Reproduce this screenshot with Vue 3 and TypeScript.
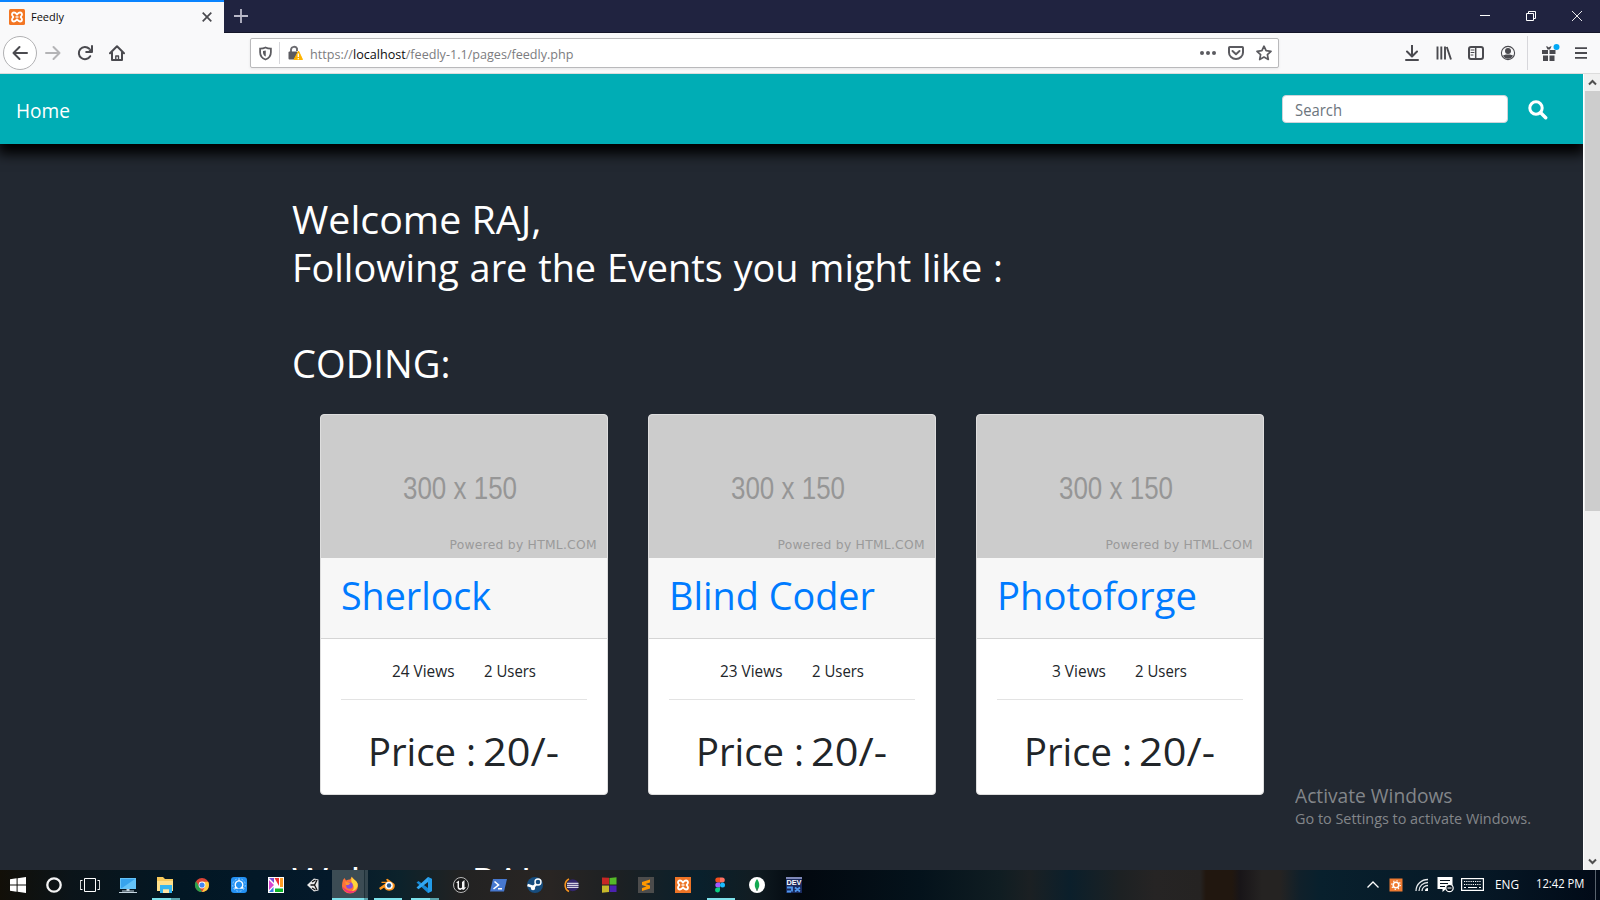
<script setup lang="ts">
import type { Directive } from 'vue'

interface EventCard { title: string; titleWidth: number; views: string; viewsWidth: number }
interface TaskItem { name: string; width: number; state?: string }

const cards: EventCard[] = [
  { title: 'Sherlock', titleWidth: 150, views: '24 Views', viewsWidth: 62.5 },
  { title: 'Blind Coder', titleWidth: 206, views: '23 Views', viewsWidth: 62.5 },
  { title: 'Photoforge', titleWidth: 200, views: '3 Views', viewsWidth: 54 },
]

const tasks: TaskItem[] = [
  { name: 'start', width: 36 }, { name: 'cortana', width: 36 }, { name: 'view', width: 37 },
  { name: 'pc', width: 38 }, { name: 'explorer', width: 37, state: 'multi' }, { name: 'chrome', width: 37 },
  { name: 'settings', width: 37 }, { name: 'picasa', width: 37 }, { name: 'unity', width: 37 },
  { name: 'firefox', width: 37, state: 'active' }, { name: 'blender', width: 37, state: 'open' },
  { name: 'vscode', width: 37, state: 'multi' }, { name: 'unreal', width: 37 }, { name: 'powershell', width: 37 },
  { name: 'steam', width: 37 }, { name: 'eclipse', width: 37 }, { name: 'blocks', width: 37 },
  { name: 'sublime', width: 37 }, { name: 'xampp', width: 37 }, { name: 'figma', width: 37, state: 'open' },
  { name: 'mongo', width: 37 }, { name: 'dev', width: 37 },
]

// Condenses a run of text to the given advance width, in the layout as well.
const vFit: Directive<HTMLElement, number> = {
  mounted(el, binding) {
    const natural = el.getBoundingClientRect().width
    if (!natural) return
    el.style.transform = `scaleX(${binding.value / natural})`
    el.style.marginRight = `${binding.value - natural}px`
  },
}
</script>

<template>
  <div class="screen">
    <header class="tabs">
      <div class="tab">
        <svg class="fav" viewBox="0 0 16 16"><rect width="16" height="16" rx="1.5" fill="#f37623" /><path d="M5 3.500C3.500 3.500 3 4.500 3 5.500S3.800 7 4.300 8C3.800 9 3 9.500 3 10.500s.5 2 2 2 2.200-1 3-2c.8 1 1.500 2 3 2s2-1 2-2-.8-1.500-1.300-2.500C12.200 7 13 6.500 13 5.500s-.5-2-2-2-2.200 1-3 2c-.8-1-1.500-2-3-2z" fill="none" stroke="#fff" stroke-width="1.800" /><path d="M6.500 8h3" stroke="#fff" stroke-width="1.400" /></svg>
        <span class="grow"><span v-fit="33" class="fit tabname">Feedly</span></span>
        <svg class="tabx" viewBox="0 0 10 10"><path d="M.7.7l8.600 8.600M9.300.7L.7 9.300" stroke="#4a4a4f" stroke-width="1.700" /></svg>
      </div>
      <svg class="plus" viewBox="0 0 14 14"><path d="M7 0v14M0 7h14" stroke="#b9b9c8" stroke-width="1.800" /></svg>
      <div class="winbtns">
        <svg viewBox="0 0 12 12"><path d="M1 5.500h10" stroke="#fff" /></svg>
        <svg viewBox="0 0 12 12"><path d="M1.500 3.500h7v7h-7zM3.500 3.500v-2h7v7h-2" fill="none" stroke="#fff" /></svg>
        <svg viewBox="0 0 12 12"><path d="M1 1l10 10M11 1L1 11" stroke="#fff" stroke-width=".9" /></svg>
      </div>
    </header>

    <div class="toolbar">
      <div class="back"><svg viewBox="0 0 16 16"><path d="M15 8H1.500M7.500 2L1.500 8l6 6" /></svg></div>
      <svg class="ico fwd" viewBox="0 0 16 16"><path d="M1 8h13.500M8.500 2l6 6-6 6" /></svg>
      <svg class="ico reload" viewBox="0 0 16 16"><path d="M13.200 11.200A6.100 6.100 0 1 1 12.300 3.800" /><path d="M15 1v6H9.200" /><path d="M11 6.500L15 2.500v4z" fill="#4a4a4f" stroke="none" /></svg>
      <svg class="ico home" viewBox="0 0 16 16"><path d="M1 8.300l7-7 7 7M3 7.500V15h10V7.500" /><path d="M6.800 15v-4h2.700v4" stroke-width="1.400" /></svg>
      <div class="url">
        <svg class="shield" viewBox="0 0 14 15"><path d="M7 1C5 2 3 2.200 1.200 2.200v4C1.200 10 3.500 12.800 7 14c3.500-1.200 5.800-4 5.800-7.800v-4C11 2.200 9 2 7 1z" fill="none" stroke="#5b5b60" stroke-width="1.900" /><path d="M7.300 4.300v6.500c-1.800-.8-3-2.600-3-4.500V4.800z" fill="#5b5b60" /></svg>
        <i class="urlsep"></i>
        <svg class="lock" viewBox="0 0 15 16"><path d="M3 7V4.500A3.200 3.200 0 0 1 9 3.500V6" fill="none" stroke="#6b6b70" stroke-width="1.900" /><rect x="0.500" y="6.500" width="9" height="8" rx="1" fill="#5b5b60" /><path d="M10.500 6l4 8.500h-8.500z" fill="#ffb400" stroke="#ffb400" stroke-linejoin="round" /><path d="M10.300 8.500v3.500M10.300 13v1.300" stroke="#fff" stroke-width="1.300" /></svg>
        <span class="grow"><span v-fit="263.5" class="fit address">https://<b>localhost</b>/feedly-1.1/pages/feedly.php</span></span>
        <svg class="dots" viewBox="0 0 16 4"><circle cx="2" cy="2" r="2" /><circle cx="8" cy="2" r="2" /><circle cx="14" cy="2" r="2" /></svg>
        <svg class="ico" viewBox="0 0 16 16"><path d="M1.800 2h12.400q.8 0 .8.800V7.500a7 6.500 0 0 1-14 0V2.800Q1 2 1.800 2z" /><path d="M4.500 6L8 9.200 11.500 6" /></svg>
        <svg class="ico star" viewBox="0 0 16 16"><path d="M8 1.200l2.100 4.500 4.900.6-3.600 3.300.9 4.900L8 12.100l-4.300 2.400.9-4.900L1 6.300l4.900-.6z" stroke-width="1.700" /></svg>
      </div>
      <div class="tools">
        <svg class="ico" viewBox="0 0 16 16"><path d="M8 0v11M3 6.500l5 5 5-5M2 15h12" /></svg>
        <svg class="ico" viewBox="0 0 16 16"><path d="M1.500 1.500v13M5.300 1.500v13M9 1.500v13M10.800 2l4.200 12.500" stroke-width="1.900" stroke-linecap="butt" /></svg>
        <svg class="ico" viewBox="0 0 16 16"><rect x="1" y="2" width="14" height="12" rx="2" /><path d="M7.700 2v12" stroke-width="1.500" /><path d="M3 5h3M3 7.500h3M3 10h2" stroke-width="1" /></svg>
        <svg class="ico" viewBox="0 0 16 16"><circle cx="8" cy="8" r="6.600" stroke-width="1.100" /><circle cx="8" cy="6" r="3" fill="#4a4a4f" stroke="none" /><path d="M3 10.500c1 0 2-1 3-1h4c1 0 2 1 3 1-1 2.300-3 3.300-5 3.300s-4-1-5-3.300z" fill="#4a4a4f" stroke="none" /></svg>
        <i class="toolsep"></i>
        <svg class="gift" viewBox="0 0 20 20"><path d="M2 7h6v4H2zM9.500 7h6v4h-6zM3 12.500h5V18H3zM9.500 12.500h5V18h-5zM6 3.300l1.500.2 1.300 1 1.300-1 1.500-.2L10 6.500H7.500z" fill="#4a4a4f" /><circle cx="16.500" cy="4" r="3" fill="#00a8f5" /></svg>
        <svg class="burger" viewBox="0 0 12 12"><path d="M0 1.200h12M0 6h12M0 10.800h12" stroke="#4a4a4f" stroke-width="1.800" /></svg>
      </div>
    </div>

    <div class="viewport">
      <main class="page">
        <nav class="nav">
          <span class="grow"><span v-fit="54" class="fit homelink">Home</span></span>
          <div class="search"><span v-fit="47" class="fit">Search</span></div>
          <svg class="glass" viewBox="0 0 20 20"><circle cx="8" cy="8" r="6.200" fill="none" stroke="#fff" stroke-width="3" /><path d="M12.700 12.700l5 5" stroke="#fff" stroke-width="3.400" stroke-linecap="round" /></svg>
        </nav>
        <div class="content">
          <h1><span v-fit="249.5" class="fit">Welcome RAJ,</span></h1>
          <h1><span v-fit="711" class="fit long">Following are the Events you might like :</span></h1>
          <h1 class="category"><span v-fit="158.5" class="fit">CODING:</span></h1>
          <div class="cards">
            <article v-for="card in cards" :key="card.title" class="card">
              <svg class="placeholder" viewBox="0 0 286 143">
                <rect width="286" height="143" fill="#ccc" />
                <text x="82" y="84" textLength="114" lengthAdjust="spacingAndGlyphs" class="dimension">300 x 150</text>
                <text x="128.500" y="133.500" textLength="147" class="powered">Powered by HTML.COM</text>
              </svg>
              <div class="cardhead"><span v-fit="card.titleWidth" class="fit">{{ card.title }}</span></div>
              <div class="cardbody">
                <div class="stats"><span v-fit="card.viewsWidth" class="fit">{{ card.views }}</span><span v-fit="52" class="fit">2 Users</span></div>
                <div class="price"><span v-fit="108" class="fit">Price :</span><span v-fit="76" class="fit">20/-</span></div>
              </div>
            </article>
          </div>
          <h1 class="next"><span v-fit="249.5" class="fit">Welcome RAJ,</span></h1>
        </div>
        <aside class="activate">
          <div class="act1"><span v-fit="157.5" class="fit">Activate Windows</span></div>
          <div class="act2"><span v-fit="236" class="fit">Go to Settings to activate Windows.</span></div>
        </aside>
      </main>
      <div class="scrollbar">
        <svg viewBox="0 0 17 17"><path d="M5 10.500l3.500-3.500 3.500 3.500" /></svg>
        <i class="thumb"></i>
        <svg viewBox="0 0 17 17"><path d="M5 6.500l3.500 3.500 3.500-3.500" /></svg>
      </div>
    </div>

    <footer class="taskbar">
      <div v-for="t in tasks" :key="t.name" class="task" :class="[t.state, t.name]" :style="{ width: t.width + 'px' }">
        <svg viewBox="0 0 20 20">
          <g v-if="t.name === 'start'" fill="#fff"><path d="M2 4.300l6.600-1v6.200H2zM9.600 3.200L18 2v7.500H9.600zM2 10.500h6.600v6.200L2 15.800zM9.600 10.500H18V18l-8.400-1.200z" /></g>
          <circle v-else-if="t.name === 'cortana'" cx="10" cy="10" r="6.700" fill="none" stroke="#f4f4f4" stroke-width="2.300" />
          <path v-else-if="t.name === 'view'" d="M4.500 3.500h11v13h-11zM2.500 5.500h-2.200v9h2.200M17.500 5.500h2.200v9h-2.200" fill="none" stroke="#fff" />
          <g v-else-if="t.name === 'pc'"><path d="M2 3h16v11H2z" fill="#64c3f8" /><path d="M3 4h14L4 13H3z" fill="#38a4ed" /><path d="M8.500 14h3v1.500h-3zM4 15.500h12v1H4zM1 17h18v1H1z" fill="#c4d4df" /></g>
          <g v-else-if="t.name === 'explorer'"><path d="M2 2h6l2 2h8v12H2z" fill="#f7c95c" /><path d="M2 6h16v10H2z" fill="#ffe08a" /><path d="M5 10h12v8h-3v-3.500H8V18H5z" fill="#35b5ef" /><path d="M8 14.500h6V18H8z" fill="#ffe7a7" /></g>
          <g v-else-if="t.name === 'chrome'"><circle cx="10" cy="10" r="7" fill="#db4437" /><path d="M4 6.300l3.500 6L10 17a7 7 0 0 1-6-10.700z" fill="#2ba24c" /><path d="M10 6.800h6.200A7 7 0 0 1 10 17l3-5.200z" fill="#ffcd40" /><circle cx="10" cy="10" r="3.400" fill="#fff" /><circle cx="10" cy="10" r="2.600" fill="#4285f4" /></g>
          <g v-else-if="t.name === 'settings'"><rect x="2" y="2" width="16" height="16" rx="3" fill="#2491f3" /><circle cx="10" cy="10" r="6.300" fill="none" stroke="#a9dcff" stroke-width=".8" stroke-dasharray="2 1.500" /><path d="M5.500 13h2.500a3.800 3.800 0 1 1 4 0h2.500M10 4.500v2" fill="none" stroke="#fff" stroke-width="1.300" /></g>
          <g v-else-if="t.name === 'picasa'"><path d="M2 2h16v16H2z" fill="#fff" /><path d="M3 3h5v5z" fill="#7c4bd1" /><path d="M8.500 3H13v8z" fill="#ef3030" /><path d="M14 3h3v9h-3z" fill="#ff9d25" /><path d="M3 5l5 5-5 5z" fill="#d946cf" /><path d="M9 13.500h8V17H9z" fill="#10b629" /><path d="M3 17l4.500-5v5z" fill="#387de4" /></g>
          <g v-else-if="t.name === 'unity'"><path d="M4 10l7-6.500 4.500 1v11l-4.500 1z" fill="#e9e9e9" /><path d="M7.500 10h4l2.500-5M11.500 10l2.500 5M9 7L12.500 5M9 13l3.500 2" stroke="#111" stroke-width="1.300" fill="none" /></g>
          <g v-else-if="t.name === 'firefox'"><path d="M3 5l1.500-2L6 5.500c1.500-1 3-1 4-1L12 2l3 3.500c2 1.500 3 3 3 5.500a8 7.500 0 0 1-16 0c0-2 .3-4 1-6z" fill="#ff7139" /><path d="M11.500 1.500c1 2.500 5 3.500 6 7 1 4-2 7-5.500 7.500 1.500-1.500 2-3 1.500-5s-3-3-2-9.500z" fill="#ffd43b" /><path d="M2.300 11.500c1 4 4 5.500 7 6.500 3 .5 6-1 7.700-3-4 2-9 2-14.700-3.500z" fill="#f0317b" /><circle cx="9.500" cy="10.500" r="3.300" fill="#8a4ad9" /><path d="M5 6.500l5.500 1.500-2 2H6z" fill="#ff9632" /></g>
          <g v-else-if="t.name === 'blender'"><path d="M2 13l7-5H4.500V6.700h6L9 4.500l1.500-.8L17.500 9c2 7-8 9-10.300 3.500L3.500 15z" fill="#ff961e" /><circle cx="12" cy="10.500" r="3.800" fill="#fff" /><circle cx="12" cy="10.500" r="2.200" fill="#245b93" /></g>
          <g v-else-if="t.name === 'vscode'"><path d="M14 2l4 2v12l-4 2L2.500 7.500 4.500 6 14 13z" fill="#1689d5" /><path d="M14 2v5L4.500 14.200l-2-1.700z" fill="#32a8f2" /><path d="M14 2l4 2v12l-4 2z" fill="#229ce9" /></g>
          <g v-else-if="t.name === 'unreal'"><circle cx="10" cy="10" r="7.500" fill="#191919" stroke="#b8b8b8" /><path d="M5 7.500l3-2v7c1 1 2 1 3 0V7l2.500-2v7.500l1.500-.5c-1 2-2 2.700-3 3l-1-1-1.500 1c-2 0-3-1-3-3V8z" fill="#f4f4f4" /></g>
          <g v-else-if="t.name === 'powershell'"><path d="M5 4h14l-3 12.500H2z" fill="#4778cf" /><path d="M6.500 6.500l4 3.500-5 4M10 13.700h4" fill="none" stroke="#fff" stroke-width="1.600" /></g>
          <g v-else-if="t.name === 'steam'"><circle cx="10" cy="10" r="8" fill="#174d7e" /><path d="M2.500 10l6 2 3.500-4" stroke="#fff" stroke-width="2.500" fill="none" /><circle cx="13" cy="7" r="3" fill="#174d7e" stroke="#fff" stroke-width="1.400" /><circle cx="8" cy="13" r="2.200" fill="#fff" /></g>
          <g v-else-if="t.name === 'eclipse'"><path d="M7 4a7 7 0 0 0 0 12.500" fill="none" stroke="#f8941e" stroke-width="1.600" /><circle cx="10.700" cy="10.200" r="6" fill="#33266c" /><path d="M5 8.300h11.500M5 10.300h11.500M5 12.300h11.500" stroke="#fff" stroke-width="1" /></g>
          <g v-else-if="t.name === 'blocks'"><path d="M3 2.500l7 .3v6.700H3z" fill="#c72725" /><path d="M10.500 3l7-.8V9.500h-7z" fill="#55b929" /><path d="M3 10.500h7V17l-7 .8z" fill="#c6b82a" /><path d="M10.500 10.500h7V17h-7z" fill="#4c22b0" /></g>
          <g v-else-if="t.name === 'sublime'"><path d="M2 2h16v16H2z" fill="#4c4c4c" /><path d="M6 7l8-2.500v3L9.500 9 14 10.500v3L6 16v-3l4.500-1.500L6 10z" fill="#ff9800" /></g>
          <g v-else-if="t.name === 'xampp'"><path d="M2 2h16v16H2z" fill="#ed7426" /><path d="M7 5.500c-1.500 0-2 1-2 2S5.800 9 6.300 10C5.800 11 5 11.500 5 12.500s.5 2 2 2 2.200-1 3-2c.8 1 1.500 2 3 2s2-1 2-2-.8-1.500-1.300-2.500C14.200 9 15 8.500 15 7.500s-.5-2-2-2-2.200 1-3 2c-.8-1-1.500-2-3-2z" fill="none" stroke="#fff" stroke-width="1.800" /><path d="M8.500 10h3" stroke="#fff" stroke-width="1.400" /></g>
          <g v-else-if="t.name === 'figma'"><path d="M10 2.500H7.800a2.500 2.500 0 0 0 0 5H10z" fill="#f24e1e" /><path d="M10 2.500h2.300a2.500 2.500 0 0 1 0 5H10z" fill="#ff7262" /><path d="M10 7.500H7.800a2.500 2.500 0 0 0 0 5H10z" fill="#a259ff" /><circle cx="12.500" cy="10" r="2.500" fill="#1abcfe" /><path d="M10 12.500v2.700a2.500 2.500 0 1 1-2.500-2.700z" fill="#0acf83" /></g>
          <g v-else-if="t.name === 'mongo'"><circle cx="10" cy="10" r="8" fill="#fff" /><path d="M10 4c3 4 3 8 0 11.500C7 12 7 8 10 4z" fill="#13aa52" /><path d="M10 13v3" stroke="#476b55" /></g>
          <g v-else><path d="M2 2h16v16H2z" fill="#1a2a5e" /><path d="M2 2h16v2H2z" fill="#7f88b8" /><text x="2.500" y="9.500" textLength="15" lengthAdjust="spacingAndGlyphs" class="devtext">DEV</text><path d="M3 12.500h5v4M11 16.500l5-4M11 12.500l5 4M3 16.500h4" stroke="#4f97ee" stroke-width="1.800" fill="none" /></g>
        </svg>
      </div>
      <div class="tray">
        <svg class="up" viewBox="0 0 14 10"><path d="M1.500 7.500L7 2l5.500 5.500" stroke="#fff" stroke-width="1.300" fill="none" /></svg>
        <svg class="orange" viewBox="0 0 14 14"><path d="M.5.5h13v13H.5z" fill="#ee7a31" /><circle cx="7" cy="7" r="2.800" fill="none" stroke="#fff" stroke-width="1.600" /><circle cx="7" cy="7" r="4.300" fill="none" stroke="#fff" stroke-width="1.200" stroke-dasharray="1.200 2.176" /></svg>
        <svg class="wifi" viewBox="0 0 14 14"><path d="M1 13C1 6.500 6.500 1.500 13 1.500M4 13c0-5 4-8.500 9-8.500M7 13c0-3 2.500-5.500 6-5.500" stroke="#e4e8eb" stroke-width="1.300" fill="none" /><path d="M10 13c0-1.700 1-3 3-3v3z" fill="#fff" /></svg>
        <svg class="note" viewBox="0 0 17 17"><path d="M.5 1h15v12H9l-3.500 3V13h-5z" fill="#fff" /><path d="M3 4.500h10M3 7.500h8M3 10.500h5" stroke="#06131e" /><circle cx="12.500" cy="12" r="3.700" fill="#06131e" stroke="#fff" stroke-width="1.200" /><path d="M10.500 12h4" stroke="#fff" /></svg>
        <svg class="keys" viewBox="0 0 23 13"><rect x=".6" y=".6" width="21.800" height="11.800" fill="none" stroke="#fff" stroke-width="1.200" /><path d="M3 3.500h17M3 6.500h17" stroke="#fff" stroke-dasharray="1.200 1" /><path d="M3 9.500h2M7 9.500h9M18 9.500h2" stroke="#fff" /></svg>
        <span class="eng"><span v-fit="24" class="fit">ENG</span></span>
        <span class="time"><span v-fit="48.5" class="fit">12:42 PM</span></span>
        <i class="desk"></i>
      </div>
    </footer>
  </div>
</template>

<style>
html, body { margin: 0; overflow: hidden; }
</style>
<style scoped>
* { box-sizing: border-box; }
svg { display: block; flex: none; }
.screen { width: 1600px; height: 900px; display: flex; flex-direction: column; overflow: hidden; font-family: "Open Sans", "Noto Sans", sans-serif; white-space: nowrap; }
.fit { display: inline-block; transform-origin: left center; }
.grow { flex: 1; }
.tabs { height: 33px; flex: none; background: #202340; border-bottom: 1px solid #141629; display: flex; align-items: center; }
.tab { width: 224px; height: 33px; background: #f9f9fa; border-top: 2px solid #0a84ff; display: flex; align-items: center; padding: 0 12px 0 9px; flex: none; align-self: flex-start; }
.fav { width: 16px; height: 16px; margin-right: 6px; margin-top: -1px; }
.tabname { font-size: 11.500px; color: #0c0c0d; line-height: 16px; vertical-align: top; margin-top: 2px; }
.tabx { width: 10px; height: 10px; margin-top: -1px; }
.plus { width: 14px; height: 14px; margin-left: 10px; }
.winbtns { margin-left: auto; display: flex; gap: 34px; padding-right: 17px; }
.winbtns svg { width: 12px; height: 12px; }
.toolbar { height: 41px; flex: none; background: #f9f9fa; border-bottom: 1px solid #dcdcdc; display: flex; align-items: center; padding-left: 3px; }
.back { width: 34px; height: 34px; border: 1px solid #b1b1b3; border-radius: 50%; background: #fff; display: grid; place-items: center; flex: none; }
.ico, .back svg { width: 16px; height: 16px; fill: none; stroke: #4a4a4f; stroke-width: 2; stroke-linecap: round; stroke-linejoin: round; }
.fwd { margin-left: 8px; stroke: #b4b4b6; }
.reload { margin-left: 16px; }
.home { margin-left: 16px; }
.url { margin-left: 125px; width: 1029px; height: 30px; border: 1px solid #b9b9bb; border-radius: 2px; box-shadow: 0 1px 3px #00000014; background: #fff; display: flex; align-items: center; padding: 0 6px 0 8px; flex: none; }
.shield { width: 13px; height: 15px; }
.urlsep { width: 1px; height: 22px; background: #d7d7db; margin: 0 8px 0 7px; }
.lock { width: 15px; height: 16px; margin-right: 7.500px; margin-left: -.5px; }
.address { font-size: 13px; line-height: 18px; color: #7c7c80; vertical-align: top; margin-top: 3px; }
.address b { font-weight: 400; color: #0c0c0d; }
.dots { width: 16px; height: 4px; fill: #5b5b60; margin-right: 12px; }
.star { margin-left: 12px; }
.url .ico { stroke: #5b5b60; }
.tools { display: flex; align-items: center; margin-left: 125px; gap: 16px; }
.toolsep { width: 1px; height: 34px; background: #d7d7db; margin: 0 -4px 0 -5px; }
.gift { width: 20px; height: 20px; margin-top: -1px; }
.burger { width: 12px; height: 12px; margin-left: -1px; }
.viewport { height: 796px; flex: none; display: flex; }
.page { width: 1583px; height: 796px; background: #222831; overflow: hidden; position: relative; }
.nav { height: 70px; background: #00adb5; box-shadow: 0 8px 12px 2px #000; display: flex; align-items: center; padding: 0 35px 0 16px; position: relative; }
.homelink { font-size: 19.500px; line-height: 26px; color: #fff; margin-top: 3px; }
.search { width: 226px; height: 28px; border: 1px solid #ced4da; border-radius: 4px; background: #fff; color: #6c757d; font-size: 15.500px; line-height: 28px; padding-left: 12px; }
.glass { width: 20px; height: 20px; margin-left: 20px; margin-top: 1px; }
.content { padding: 51px 0 0 291.500px; }
h1 { margin: 0; font-size: 39px; font-weight: 400; line-height: 48px; height: 48px; color: #fff; }
.long { word-spacing: 1px; }
.category { margin-top: 48px; }
.cards { display: flex; gap: 40px; margin: 27px 0 0 28.500px; }
.card { width: 288px; height: 381px; border: 1px solid #dedede; border-radius: 4px; background: #fff; overflow: hidden; }
.placeholder { width: 286px; height: 143px; }
.dimension { font-family: "Liberation Sans", sans-serif; font-size: 31px; fill: #969696; }
.powered { font-family: "DejaVu Sans", sans-serif; font-size: 12.300px; fill: #9a9a9a; }
.cardhead { height: 81px; background: #f7f7f7; border-bottom: 1px solid #d5d5d5; color: #007bff; font-size: 39px; line-height: 48px; padding: 13px 20px 0 19.500px; }
.cardbody { padding: 20px; color: #212529; }
.stats { height: 41px; border-bottom: 1px solid #e3e3e3; display: flex; justify-content: center; gap: 29.500px; font-size: 15.500px; line-height: 24px; padding-right: 1px; }
.price { display: flex; justify-content: center; gap: 7px; font-size: 39px; line-height: 48px; margin-top: 27px; padding-right: 2px; }
.next { margin-top: 62px; }
.activate { position: absolute; left: 1295px; top: 708px; color: #83868a; }
.act1 { font-size: 19.500px; line-height: 28px; }
.act2 { font-size: 14.500px; line-height: 18px; }
.scrollbar { width: 17px; background: #f0f0f0; border-left: 1px solid #fff; display: flex; flex-direction: column; align-items: center; }
.scrollbar svg { width: 17px; height: 17px; fill: none; stroke: #505050; stroke-width: 2; }
.thumb { width: 15px; height: 420px; background: #cdcdcd; margin-bottom: auto; }
.taskbar { height: 30px; flex: none; display: flex; background: linear-gradient(90deg, #120f08 0, #0b1419 70px, #021724 180px, #04192a 330px, #0c222b 400px, #222222 460px, #292523 550px, #1c2023 620px, #09202c 700px, #111d23 750px, #02080f 800px, #04121b 920px, #101d22 1000px, #1b2023 1030px, #0b1f2b 1070px, #1d2123 1120px, #262424 1155px, #252322 1200px, #21170f 1206px, #21170f 1232px, #181518 1240px, #252322 1262px, #252322 1280px, #10202a 1300px, #08202d 1320px, #061826 1480px, #010a17 1600px); }
.task { height: 30px; display: grid; place-items: center; flex: none; border-bottom: 2px solid transparent; padding-top: 2px; }
.task svg { width: 20px; height: 20px; margin-right: 2px; }
.start svg, .cortana svg, .pc svg { margin-right: 0; }
.open { background: linear-gradient(#7de2ec, #7de2ec) 50% 100% / 28px 2px no-repeat border-box; }
.multi { background: linear-gradient(90deg, #7de2ec 0 19px, #5aa4ad 19px) 50% 100% / 28px 2px no-repeat border-box; }
.active { background: linear-gradient(90deg, #7de2ec 0 32px, #5aa4ad 32px) 0 100% / 36px 2px no-repeat border-box, linear-gradient(90deg, #3c4c54 0 32px, #1e3038 32px 33px, #35464e 33px 36px, transparent 36px); }
.devtext { font: 900 7px "Liberation Sans", sans-serif; fill: #fff; }
.tray { margin-left: auto; display: flex; align-items: center; color: #fff; font-size: 12px; line-height: 18px; height: 29px; }
.up { width: 14px; height: 10px; }
.orange { width: 14px; height: 14px; margin-left: 9px; }
.wifi { width: 14px; height: 14px; margin-left: 12px; }
.note { width: 17px; height: 17px; margin-left: 8px; }
.keys { width: 23px; height: 13px; margin-left: 7px; }
.eng { margin-left: 11px; width: 24px; }
.time { margin-left: 17px; width: 50px; margin-top: -1px; }
.desk { width: 1px; height: 30px; background: #59636d; margin: 0 4px 0 9px; }
</style>
